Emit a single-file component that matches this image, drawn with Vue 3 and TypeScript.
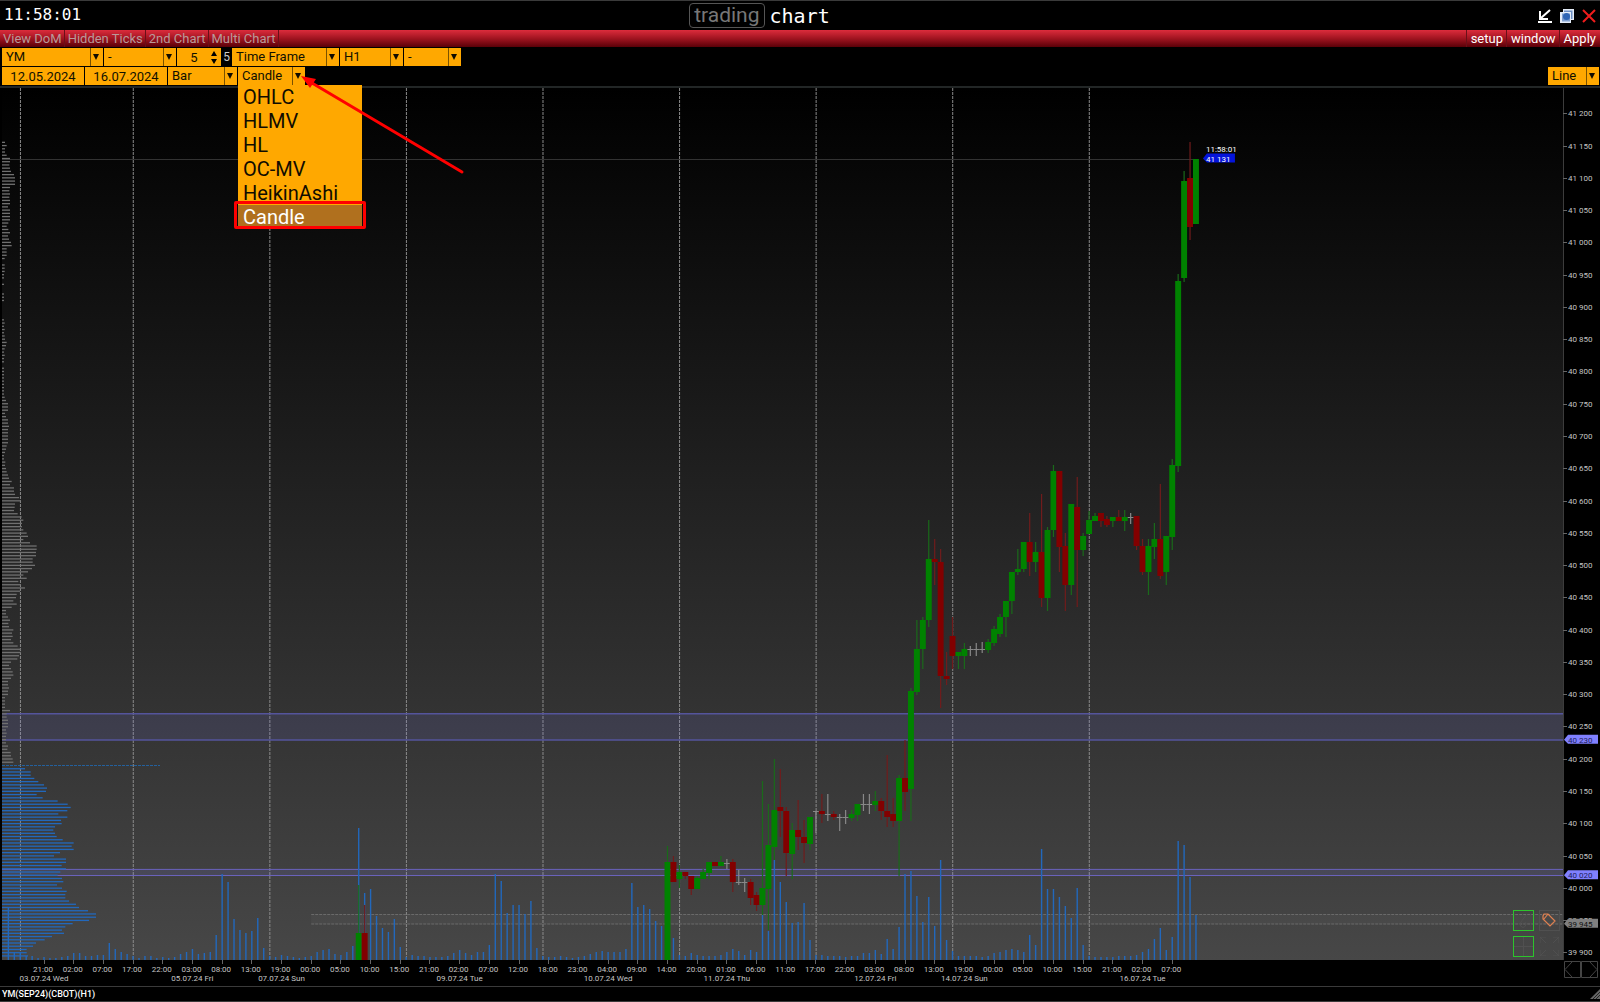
<script setup lang="ts">
import { computed, onBeforeUnmount, onMounted, ref } from 'vue'

type Tone = 'up' | 'down' | 'flat'
type CandleRow = [tone: 'u' | 'd' | 'f', top: number, bottom: number, high: number, low: number]

const area = ref<HTMLElement | null>(null)
const width = ref(1600)
const height = ref(898)
let observer: ResizeObserver | undefined

onMounted(() => {
  observer = new ResizeObserver(([entry]) => {
    width.value = Math.round(entry.contentRect.width)
    height.value = Math.round(entry.contentRect.height)
  })
  if (area.value) observer.observe(area.value)
})
onBeforeUnmount(() => observer?.disconnect())

// Levels are stored on a 872-unit tall grid whose first line is 88.
const TOP = 88
const SPAN = 872
const AXIS_W = 37
const AXIS_H = 26

const plotW = computed(() => width.value - AXIS_W)
const plotH = computed(() => height.value - AXIS_H)
const step = computed(() => (5.938 * plotW.value) / 1563)
const x = (bar: number) => (44 * plotW.value) / 1563 + bar * step.value
const y = (level: number) => ((level - TOP) * plotH.value) / SPAN
const snap = (value: number) => Math.round(value) + 0.5
const levelOf = (price: number) => 113.3 + (41200 - price) * 0.6454

const prices = Array.from({ length: 27 }, (_, i) => 41200 - i * 50)
const money = (price: number) => `${Math.floor(price / 1000)} ${String(price % 1000).padStart(3, '0')}`

const hours = [
  '21:00', '02:00', '07:00', '17:00', '22:00', '03:00', '08:00', '13:00', '19:00', '00:00',
  '05:00', '10:00', '15:00', '21:00', '02:00', '07:00', '12:00', '18:00', '23:00', '04:00',
  '09:00', '14:00', '20:00', '01:00', '06:00', '11:00', '17:00', '22:00', '03:00', '08:00',
  '13:00', '19:00', '00:00', '05:00', '10:00', '15:00', '21:00', '02:00', '07:00',
]
const days: [number, string][] = [
  [0, '03.07.24 Wed'], [25, '05.07.24 Fri'], [40, '07.07.24 Sun'], [70, '09.07.24 Tue'], [95, '10.07.24 Wed'],
  [115, '11.07.24 Thu'], [140, '12.07.24 Fri'], [155, '14.07.24 Sun'], [185, '16.07.24 Tue'],
]
const sessions = [-4, 15, 38, 61, 84, 107, 130, 153, 176]

const candleRows: CandleRow[] = [
  ['u', 862, 960, 846, 960], ['d', 862, 882, 856, 882], ['u', 872, 879, 865, 888], ['d', 872, 876, 872, 879],
  ['d', 876, 889, 876, 895], ['u', 878, 889, 876, 889], ['u', 872, 879, 869, 879], ['u', 862, 873, 862, 879],
  ['d', 862, 866, 862, 866], ['u', 862, 866, 856, 866], ['f', 863, 863, 859, 869], ['d', 862, 882, 859, 892],
  ['f', 882, 882, 870, 885], ['f', 882, 882, 878, 892], ['d', 882, 898, 879, 905], ['d', 895, 905, 892, 911],
  ['u', 888, 905, 781, 915], ['u', 845, 889, 804, 930], ['u', 810, 847, 759, 860], ['d', 807, 811, 769, 837],
  ['d', 811, 853, 807, 876], ['u', 830, 854, 823, 879], ['d', 830, 837, 800, 850], ['d', 837, 843, 820, 863],
  ['u', 817, 844, 817, 850], ['f', 811, 811, 811, 833], ['d', 811, 814, 794, 823], ['f', 814, 814, 794, 821],
  ['d', 814, 817, 811, 820], ['f', 817, 817, 814, 831], ['f', 817, 817, 810, 824], ['u', 814, 818, 810, 821],
  ['u', 804, 815, 804, 821], ['f', 804, 804, 794, 811], ['f', 804, 804, 794, 814], ['u', 801, 805, 791, 811],
  ['d', 801, 811, 798, 820], ['d', 811, 817, 755, 827], ['d', 814, 821, 798, 827], ['u', 778, 821, 775, 876],
  ['d', 778, 792, 740, 811], ['u', 691, 789, 688, 821], ['u', 649, 692, 620, 695], ['u', 620, 649, 617, 669],
  ['u', 559, 620, 520, 627], ['d', 559, 562, 539, 585], ['d', 562, 676, 549, 708], ['d', 676, 679, 652, 685],
  ['d', 636, 656, 617, 669], ['u', 652, 656, 652, 669], ['u', 649, 656, 643, 669], ['f', 649, 649, 646, 656],
  ['f', 649, 649, 643, 656], ['f', 649, 649, 642, 653], ['u', 642, 650, 639, 653], ['u', 629, 643, 626, 646],
  ['u', 617, 634, 614, 637], ['u', 601, 617, 601, 637], ['u', 572, 601, 572, 614], ['u', 569, 572, 549, 575],
  ['u', 542, 569, 542, 572], ['d', 542, 562, 513, 576], ['u', 552, 562, 542, 572], ['d', 552, 598, 494, 607],
  ['u', 530, 598, 527, 611], ['u', 471, 530, 465, 537], ['d', 471, 547, 471, 572], ['d', 546, 585, 533, 611],
  ['u', 504, 585, 504, 595], ['d', 507, 550, 477, 607], ['u', 536, 550, 533, 556], ['u', 520, 534, 511, 534],
  ['u', 516, 521, 513, 521], ['d', 513, 521, 513, 527], ['d', 519, 525, 516, 527], ['u', 517, 521, 517, 527],
  ['d', 517, 521, 510, 521], ['u', 517, 521, 510, 531], ['f', 517, 517, 513, 524], ['d', 516, 546, 516, 550],
  ['d', 546, 572, 539, 575], ['u', 546, 572, 539, 595], ['u', 539, 547, 523, 559], ['d', 539, 576, 484, 579],
  ['u', 536, 572, 536, 585], ['u', 465, 537, 459, 550], ['u', 281, 466, 274, 472], ['u', 181, 278, 171, 282],
  ['d', 178, 227, 142, 240], ['u', 159, 224, 159, 224],
]
const tones: Record<'u' | 'd' | 'f', Tone> = { u: 'up', d: 'down', f: 'flat' }
const shape = (bar: number, [tone, top, bottom, high, low]: CandleRow) => ({ bar, tone: tones[tone], top, bottom, high, low })
const candles = [
  shape(53, ['u', 933, 960, 885, 960]),
  shape(54, ['d', 933, 960, 905, 960]),
  ...candleRows.map((row, i) => shape(105 + i, row)),
]

// Top of every volume bar, starting six bars before the first time label.
const volumes = [
  908, 952, 952, 956, 956, 958, 957, 958, 958, 957, 956, 953, 953, 956, 956, 955, 955, 943, 949, 952,
  954, 956, 958, 956, 956, 958, 957, 958, 957, 954, 952, 949, 954, 953, 952, 935, 874, 882, 919, 930,
  933, 931, 918, 948, 956, 957, 955, 956, 957, 958, 957, 956, 952, 950, 949, 954, 955, 952, 946, 828,
  893, 889, 916, 928, 932, 919, 947, 957, 955, 956, 956, 957, 957, 957, 956, 953, 950, 953, 955, 952,
  952, 945, 874, 881, 913, 905, 905, 914, 901, 948, 956, 957, 957, 956, 957, 958, 957, 956, 954, 952,
  951, 952, 952, 952, 949, 883, 907, 905, 909, 921, 926, 960, 938, 955, 956, 953, 955, 956, 956, 956,
  955, 952, 949, 951, 955, 950, 952, 915, 931, 860, 882, 902, 923, 922, 903, 940, 955, 955, 956, 956,
  956, 957, 956, 956, 953, 953, 950, 954, 939, 949, 927, 874, 871, 896, 922, 897, 926, 860, 940, 951,
  956, 956, 956, 956, 957, 956, 953, 952, 950, 949, 950, 952, 935, 945, 849, 889, 889, 897, 906, 918,
  888, 945, 956, 957, 957, 957, 957, 956, 956, 956, 955, 952, 949, 939, 928, 950, 937, 841, 845, 877,
  915,
]

// Price profile rows, in thirds of a unit.
const profileHigh = [
  15, 20, 15, 15, 20, 30, 30, 28, 30, 33, 42, 45, 45, 45, 30, 28, 30, 28, 30, 30, 24, 30, 30, 30, 30,
  25, 20, 25, 30, 24, 27, 33, 35, 20, 20, 20, 14, 0, 14, 14, 14, 12, 12, 0, 12, 0, 0, 12, 12, 12,
  0, 0, 0, 0, 0, 12, 14, 12, 14, 12, 14, 15, 20, 18, 14, 12, 14, 12, 12, 0, 12, 12, 12, 12, 12,
  12, 12, 12, 12, 14, 18, 24, 24, 24, 15, 18, 24, 24, 27, 24, 24, 24, 24,
]
const profileMid = [
  24, 20, 18, 15, 12, 12, 16, 15, 18, 20, 24, 27, 35, 30, 42, 42, 45, 57, 62, 45, 44, 42, 53, 65, 70,
  66, 66, 70, 80, 84, 70, 90, 110, 110, 108, 108, 98, 98, 105, 96, 84, 70, 80, 55, 62, 75, 60, 50, 48, 40,
  50, 35, 18, 18, 24, 30, 25, 27, 40, 36, 38, 33, 40, 53, 63, 63, 57, 52, 33, 27, 33, 38, 40, 33, 24,
  24, 27, 24, 24, 15, 15, 15, 15, 30, 20, 20, 24, 24, 24, 18, 20, 18, 18, 18, 24, 22, 32, 33, 38, 40,
]
const profileLow = [
  75, 92, 92, 103, 115, 132, 141, 138, 110, 128, 173, 203, 212, 202, 175, 202, 183, 185, 165, 160,
  165, 170, 188, 221, 215, 221, 180, 162, 198, 198, 185, 198, 181, 173, 186, 190, 171, 186, 200, 196,
  196, 207, 228, 237, 264, 288, 288, 267, 218, 196, 186, 192, 156, 134, 108, 99, 80, 80, 84,
]
const rows = (list: number[], first: number, value: boolean) =>
  list.map((end, i) => ({ level: first + i * 3.227, length: Math.max(0, end / 3 - 2), value })).filter((r) => r.length)
const profile = [...rows(profileHigh, 142.3, false), ...rows(profileMid, 442.7, false), ...rows(profileLow, 768.7, true)]

const zones = [
  { top: 713.7, bottom: 740, cls: 'zone' },
  { top: 869.4, bottom: 875.5, cls: 'zone thin' },
]
const tags = [
  { price: 40230, cls: 'tag-violet' },
  { price: 40020, cls: 'tag-violet' },
  { price: 39945, cls: 'tag-grey' },
]

const menu = ['View DoM', 'Hidden Ticks', '2nd Chart', 'Multi Chart']
const actions = ['setup', 'window', 'Apply']
const styles = ['OHLC', 'HLMV', 'HL', 'OC-MV', 'HeikinAshi', 'Candle']
const chosen = ref('Candle')
const open = ref(true)
const depth = ref(5)
const from = ref('12.05.2024')
const to = ref('16.07.2024')

function pick(name: string) {
  chosen.value = name
}
</script>

<template>
  <div class="app">
    <header class="title-bar">
      <time class="clock">11:58:01</time>
      <h1 class="brand"><span class="boxed">trading</span><span class="word">chart</span></h1>
      <div class="win-buttons">
        <button type="button" aria-label="Minimize">
          <svg width="14" height="14" viewBox="0 0 14 14" fill="none" stroke="#fff" stroke-width="2">
            <path d="M12 1 3 9M2 2v8h8M0 13h14" />
          </svg>
        </button>
        <button type="button" aria-label="Restore">
          <svg width="14" height="14" viewBox="0 0 14 14">
            <path d="M3 0h11v11h-3v3H0V3h3z" fill="#e4ecf8" />
            <path d="M4 1.500h8.500V10H11V3H4z" fill="#6d8fc4" />
            <rect x="2" y="4.500" width="8" height="8" fill="#7f9fd0" />
            <circle cx="6.500" cy="7.500" r="3.500" fill="#2f65b5" />
          </svg>
        </button>
        <button type="button" aria-label="Close">
          <svg width="14" height="14" viewBox="0 0 14 14" stroke="#ee1c1c" stroke-width="2">
            <path d="M1 1l12 12M13 1 1 13" />
          </svg>
        </button>
      </div>
    </header>

    <nav class="menu-bar">
      <button v-for="item in menu" :key="item" type="button" class="menu-item">{{ item }}</button>
      <span class="grow"></span>
      <button v-for="item in actions" :key="item" type="button" class="menu-item action">{{ item }}</button>
    </nav>

    <div class="toolbar">
      <div class="row">
        <span class="combo w-symbol"><select aria-label="Symbol"><option>YM</option></select></span>
        <span class="combo w-extra"><select aria-label="Contract"><option>-</option></select></span>
        <span class="spinner">
          <input v-model="depth" type="text" aria-label="Depth" />
          <span class="steps">
            <button type="button" aria-label="Increase" @click="depth++"><svg width="6" height="5" viewBox="0 0 6 5"><path d="M0 5 3 0l3 5z" /></svg></button>
            <button type="button" aria-label="Decrease" @click="depth--"><svg width="6" height="5" viewBox="0 0 6 5"><path d="M0 0h6L3 5z" /></svg></button>
          </span>
        </span>
        <span class="count">5</span>
        <span class="combo w-frame"><select aria-label="Frame type"><option>Time Frame</option></select></span>
        <span class="combo w-period"><select aria-label="Period"><option>H1</option></select></span>
        <span class="combo w-filter"><select aria-label="Filter"><option>-</option></select></span>
      </div>
      <div class="row">
        <input v-model="from" class="date" type="text" aria-label="From" />
        <input v-model="to" class="date" type="text" aria-label="To" />
        <span class="combo w-bar"><select aria-label="Series"><option>Bar</option></select></span>
        <div class="picker">
          <button type="button" class="combo w-style" aria-haspopup="listbox" :aria-expanded="open" @click="open = !open">
            <span class="value">{{ chosen }}</span>
          </button>
          <ul v-if="open" class="options" role="listbox" aria-label="Chart style">
            <li v-for="name in styles" :key="name" role="option" :aria-selected="name === chosen" :class="{ on: name === chosen }" @click="pick(name)">{{ name }}</li>
          </ul>
          <svg class="pointer" width="164" height="100" viewBox="0 0 164 100">
            <path d="M161 96 11 7" stroke="#f00" stroke-width="3" stroke-linecap="round" />
            <path d="M0 0 15 3 9 12z" fill="#f00" />
          </svg>
        </div>
        <span class="grow"></span>
        <span class="combo w-line"><select aria-label="Line type"><option>Line</option></select></span>
      </div>
    </div>

    <main ref="area" class="chart">
      <svg class="canvas" :width="width" :height="height">
        <defs>
          <linearGradient id="sky" x1="0" y1="0" x2="0" y2="1">
            <stop offset="0" stop-color="#000" />
            <stop offset="1" stop-color="#474747" />
          </linearGradient>
        </defs>
        <rect x="2" y="0" :width="plotW - 2" :height="plotH" fill="url(#sky)" />

        <path class="cross" :d="`M2 ${snap(y(158.5))}H${x(194)}`" />
        <g class="sessions">
          <path v-for="s in sessions" :key="s" :d="`M${x(s) + 0.2} 0V${plotH}`" />
        </g>

        <g v-for="z in zones" :key="z.top" :class="z.cls">
          <rect x="2" :y="y(z.top)" :width="plotW - 2" :height="y(z.bottom) - y(z.top)" />
          <path :d="`M2 ${y(z.top)}H${plotW}M2 ${y(z.bottom)}H${plotW}`" />
        </g>
        <g class="range">
          <rect :x="x(45)" :y="y(914.5)" :width="plotW - x(45)" :height="y(924) - y(914.5)" />
          <path :d="`M${x(45)} ${y(914.5)}H${plotW}M${x(45)} ${y(924)}H${plotW}`" />
        </g>

        <g class="profile">
          <rect v-for="(r, i) in profile" :key="i" :class="{ value: r.value }" x="2" :y="y(r.level) - 0.6" :width="r.length" height="1.3" />
          <path class="poc" :d="`M2 ${snap(y(765))}H160`" />
        </g>

        <g class="volumes">
          <rect v-for="(v, i) in volumes" :key="i" :x="x(i - 6) - 0.7" :y="y(v)" width="1.4" :height="plotH - y(v)" />
        </g>

        <g v-for="c in candles" :key="c.bar" :class="c.tone">
          <rect class="wick" :x="x(c.bar) - 0.6" :y="y(c.high)" width="1.2" :height="y(c.low) - y(c.high)" />
          <rect v-if="c.tone !== 'flat'" :x="x(c.bar) - step / 2" :y="y(c.top)" :width="step" :height="y(c.bottom) - y(c.top)" />
          <rect v-else :x="x(c.bar) - step / 2" :y="y(c.top)" :width="step" height="1" />
        </g>

        <text class="light" :x="x(195) + 4" :y="y(152)">11:58:01</text>
        <path :d="`M${x(195) + 1} ${y(158.5)}l4 -5h28v9h-28z`" fill="#0414dc" />
        <text class="light" :x="x(195) + 4" :y="y(158.5) + 3">41 131</text>

        <path class="axis" :d="`M${plotW + 0.5} 0V${plotH}`" />
        <g v-for="p in prices" :key="p">
          <path class="tick" :d="`M${plotW} ${snap(y(levelOf(p)))}h4`" />
          <text :x="plotW + 5" :y="y(levelOf(p)) + 3">{{ money(p) }}</text>
        </g>
        <g v-for="t in tags" :key="t.price" :class="t.cls">
          <path :d="`M${plotW + 1} ${y(levelOf(t.price)) + 0.5}l4 -5h30v9h-30z`" />
          <text :x="plotW + 5" :y="y(levelOf(t.price)) + 3.5">{{ money(t.price) }}</text>
        </g>

        <g text-anchor="middle">
          <g v-for="(h, i) in hours" :key="i">
            <path class="tick" :d="`M${snap(x(i * 5) - 0.5)} ${plotH}v4`" />
            <text :x="x(i * 5) - 1" :y="plotH + 12">{{ h }}</text>
          </g>
          <text v-for="[bar, day] in days" :key="bar" :x="x(bar)" :y="plotH + 21">{{ day }}</text>
        </g>
      </svg>

      <div class="tools">
        <button type="button" class="tool on" aria-label="Cursor">
          <svg width="19" height="19" viewBox="0 0 19 19" fill="none" stroke="#505050"><path d="M12 4 7 11m0 0a3 3 0 1 0 4 0" /></svg>
        </button>
        <button type="button" class="tool" aria-label="Label">
          <svg width="19" height="19" viewBox="0 0 19 19" fill="none" stroke="#e08050" stroke-width="1.200"><path d="M3 5 4 3 8 3 15 10 10 15 3 8zM4 8l4-5" /></svg>
        </button>
        <button type="button" class="tool on" aria-label="Crosshair">
          <svg width="19" height="19" viewBox="0 0 19 19" stroke="#505050"><path d="M9.500 0v19M0 9.500h19" /></svg>
        </button>
        <button type="button" class="tool bare" aria-label="Expand">
          <svg width="19" height="19" viewBox="0 0 19 19" fill="none" stroke="#505050"><path d="M0 6V0h6M0 0l6 6M13 0h6v6M19 0l-6 6M0 13v6h6M0 19l6-6M13 19h6v-6M19 19l-6-6" /></svg>
        </button>
      </div>

      <div class="pager">
        <button type="button" aria-label="Back">
          <svg width="17" height="17" viewBox="0 0 17 17" fill="none" stroke="#444"><path d="M.5.5h16v16H.5zM8 1 1 8.500 8 16" /></svg>
        </button>
        <button type="button" aria-label="Forward">
          <svg width="17" height="17" viewBox="0 0 17 17" fill="none" stroke="#444"><path d="M.5.5h16v16H.5zM9 1l7 7.500L9 16" /></svg>
        </button>
      </div>
    </main>

    <footer class="status">
      <span>YM(SEP24)(CBOT)(H1)</span>
      <svg width="10" height="10" viewBox="0 0 10 10"><path d="M10 0v10H0z" fill="#666" /><path d="M3 10 10 3M6 10l4-4" stroke="#222" /></svg>
    </footer>
  </div>
</template>

<style>
html,
body {
  margin: 0;
  background: #000;
}
</style>

<style scoped>
.app {
  box-sizing: border-box;
  display: flex;
  flex-direction: column;
  height: 100vh;
  min-height: 400px;
  border-top: 1px solid #3a3a3a;
  border-bottom: 1px solid #3a3a3a;
  background: #000;
  color: #fff;
  font-family: Roboto, 'Liberation Sans', sans-serif;
  font-size: 13px;
  overflow: hidden;
}
button,
input,
select {
  margin: 0;
  padding: 0;
  border: 0;
  border-radius: 0;
  background: none;
  color: inherit;
  font: inherit;
}
svg {
  display: block;
}
.grow {
  flex: 1;
}

.title-bar {
  display: grid;
  grid-template-columns: 17fr auto 19fr;
  align-items: center;
  height: 29px;
}
.clock {
  padding: 0 0 2px 4px;
  font: 16px/24px 'DejaVu Sans Mono', monospace;
}
.brand {
  display: flex;
  align-items: center;
  gap: 5px;
  margin: 0;
  font-weight: 400;
}
.boxed {
  padding: 0 4px;
  border: 1px solid #555;
  border-radius: 4px;
  color: #777;
  font-size: 21px;
  line-height: 23px;
}
.word {
  font: 20px/24px 'DejaVu Sans Mono', monospace;
}
.win-buttons {
  display: flex;
  justify-content: flex-end;
  gap: 8px;
  padding-right: 4px;
}

.menu-bar {
  display: flex;
  height: 17px;
  padding-right: 1px;
  background: linear-gradient(#dc2c3c, #a01420 50%, #5a0008);
}
.menu-item {
  padding: 0 2px 0 3px;
  border-right: 1px solid #6a1018;
  color: #b99a9a;
  line-height: 17px;
}
.menu-item.action {
  border-right: 0;
  border-left: 1px solid #6a1018;
  padding: 0 3px 0 4px;
  color: #fff;
}

.toolbar {
  display: flex;
  flex-direction: column;
  padding: 1px 1px 0 2px;
  border-bottom: 2px solid #222626;
  color: #101000;
}
.row {
  display: flex;
  gap: 1px;
  height: 19px;
}
.combo {
  box-sizing: border-box;
  position: relative;
  display: flex;
  height: 18px;
  background: #ffa800;
}
.combo::after {
  content: '';
  position: absolute;
  top: 6px;
  right: 4px;
  border: 3px solid transparent;
  border-top: 6px solid #100c00;
  border-bottom: 0;
}
.combo::before {
  content: '';
  position: absolute;
  top: 0;
  right: 12px;
  width: 1px;
  height: 18px;
  background: #7a5200;
}
.combo select,
.combo .value {
  flex: 1;
  width: 100%;
  padding-left: 4px;
  appearance: none;
  text-align: left;
  line-height: 18px;
}
.w-symbol { width: 101px; }
.w-extra { width: 72px; }
.w-frame { width: 107px; }
.w-period { width: 63px; }
.w-filter { width: 57px; }
.w-bar { width: 69px; }
.w-style { width: 67px; }
.w-line { width: 51px; }
.spinner {
  display: flex;
  width: 44px;
  height: 18px;
  background: #ffa800;
}
.spinner input {
  width: 34px;
  text-align: center;
}
.steps {
  display: flex;
  flex-direction: column;
  justify-content: center;
  gap: 3px;
}
.count {
  width: 9px;
  color: #ccc;
  font-size: 12px;
  line-height: 18px;
  text-align: center;
}
.date {
  width: 82px;
  height: 18px;
  background: #ffa800;
  text-align: center;
}
.picker {
  position: relative;
}
.options {
  position: absolute;
  z-index: 2;
  top: 18px;
  left: 0;
  width: 124px;
  margin: 0;
  padding: 0;
  background: #ffa800;
  color: #100c00;
  font-size: 20px;
  line-height: 24px;
  list-style: none;
}
.options li {
  position: relative;
  padding-left: 5px;
}
.options .on {
  background: #b0701e;
  color: #fff;
}
.options .on::after {
  content: '';
  position: absolute;
  inset: -4px -4px 0;
  border: 3px solid #f00;
  border-radius: 2px;
}
.pointer {
  position: absolute;
  z-index: 3;
  top: 9px;
  left: 63px;
  pointer-events: none;
}

.chart {
  position: relative;
  flex: 1;
  min-height: 0;
  overflow: hidden;
}
.canvas {
  position: absolute;
  inset: 0;
}
.canvas text {
  fill: #c4c4c4;
  font-size: 8px;
}
.canvas text.light { fill: #fff; }
.cross { stroke: #333; }
.sessions path {
  stroke: #8a8a8a;
  stroke-dasharray: 3 1;
}
.zone rect { fill: #8080ff; fill-opacity: 0.12; }
.zone path { stroke: #54549c; stroke-width: 1.5; }
.thin path { stroke: #6a62bc; stroke-width: 1; }
.range rect { fill: #fff; fill-opacity: 0.03; }
.range path { stroke: #6a6a6a; stroke-dasharray: 3 1; }
.profile rect { fill: #707070; }
.profile .value { fill: #2268bc; }
.profile .poc { stroke: #24609c; stroke-dasharray: 3 1; }
.volumes rect { fill: #2268bc; }
.up rect { fill: #008200; }
.down rect { fill: #820000; }
.flat rect { fill: #888; }
.up .wick { fill: #1a6a1a; }
.down .wick { fill: #701c1c; }
.axis { stroke: #3c3c3c; }
.tick { stroke: #666; }
.tag-violet path { fill: #8080ff; }
.tag-grey path { fill: #808080; }
.canvas .tag-violet text { fill: #202060; }
.canvas .tag-grey text { fill: #111; }

.tools {
  position: absolute;
  right: 40px;
  bottom: 29px;
  display: grid;
  grid-template-columns: 21px 21px;
  gap: 5px;
}
.tool {
  border: 1px solid #505050;
}
.tool.on { border-color: #2cc42c; }
.tool.bare { border-color: transparent; }
.pager {
  position: absolute;
  right: 2px;
  bottom: 8px;
  display: flex;
}
.status {
  display: flex;
  align-items: center;
  justify-content: space-between;
  height: 14px;
  padding-left: 2px;
  border-top: 1px solid #3a3a3a;
  font-size: 9px;
  font-weight: 500;
}
</style>
